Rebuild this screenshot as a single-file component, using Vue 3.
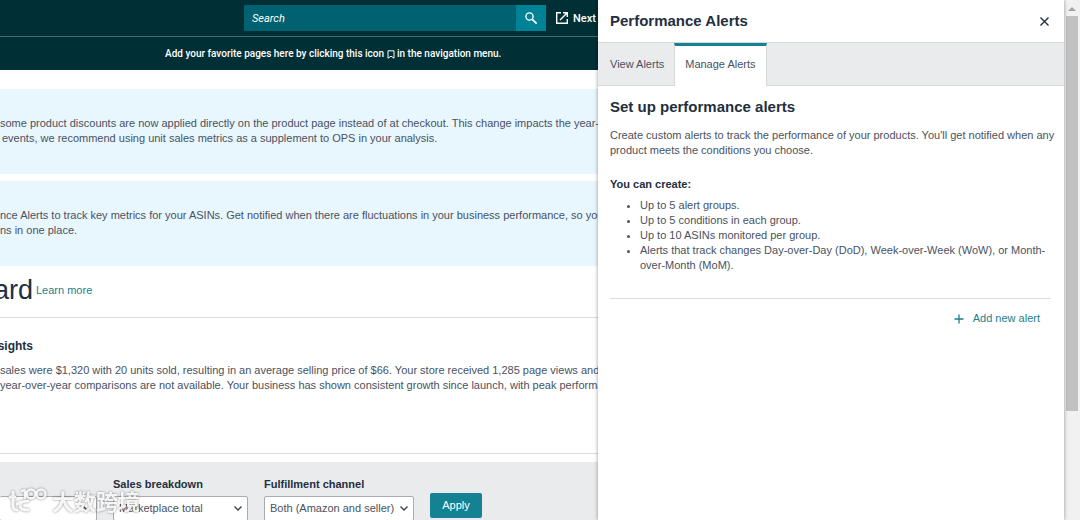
<script setup>
import { ref } from 'vue'

const activeTab = ref('Manage Alerts')
const tabs = ['View Alerts', 'Manage Alerts']
const period = ref('')
const breakdown = ref('Marketplace total')
const channel = ref('Both (Amazon and seller)')
const limits = [
  'Up to 5 alert groups.',
  'Up to 5 conditions in each group.',
  'Up to 10 ASINs monitored per group.',
  'Alerts that track changes Day-over-Day (DoD), Week-over-Week (WoW), or Month-over-Month (MoM).',
]
</script>

<template>
  <div class="screen">
    <div class="page">
      <header class="top">
        <div class="nav">
          <form class="search" @submit.prevent>
            <input type="text" placeholder="Search" aria-label="Search" />
            <button type="submit" aria-label="Submit search">
              <svg width="14" height="14" viewBox="0 0 14 14" fill="none" stroke="currentColor" stroke-width="1.4">
                <circle cx="5.5" cy="5.5" r="3.6" />
                <path d="M8.3 8.3 12.6 12.6" stroke-width="1.7" />
              </svg>
            </button>
          </form>
          <a href="#" class="next">
            <svg width="14" height="14" viewBox="0 0 14 14" fill="none" stroke="currentColor" stroke-width="1.4">
              <path d="M6 1.7H1.7v10.6h10.6V8" />
              <path d="M8 1.7h4.3V6M12.3 1.7 5 9" />
            </svg>
            Next
          </a>
        </div>
        <p class="favorites">
          Add your favorite pages here by clicking this icon
          <svg width="8" height="9" viewBox="0 0 8 9" fill="none" stroke="currentColor">
            <path d="M1 .8h6v7.400L4 6.200 1 8.200z" />
          </svg>
          in the navigation menu.
        </p>
      </header>

      <main>
        <section class="notice">
          <p>some product discounts are now applied directly on the product page instead of at checkout. This change impacts the year-over-y</p>
          <p class="tucked">events, we recommend using unit sales metrics as a supplement to OPS in your analysis.</p>
        </section>
        <section class="notice">
          <p>nce Alerts to track key metrics for your ASINs. Get notified when there are fluctuations in your business performance, so you can</p>
          <p>ns in one place.</p>
        </section>
        <div class="title">
          <h1>ard</h1>
          <a href="#">Learn more</a>
        </div>
        <section class="insights">
          <h2>sights</h2>
          <p>sales were $1,320 with 20 units sold, resulting in an average selling price of $66. Your store received 1,285 page views and main</p>
          <p>year-over-year comparisons are not available. Your business has shown consistent growth since launch, with peak performance</p>
        </section>
        <form class="filters" @submit.prevent>
          <div class="field first">
            <span class="box">
              <select v-model="period" aria-label="Date range"><option></option></select>
              <svg width="10" height="7" viewBox="0 0 10 7"><path d="M1.500 1.500 5 5l3.500-3.500" /></svg>
            </span>
          </div>
          <div class="field second">
            <label for="breakdown">Sales breakdown</label>
            <span class="box">
              <select id="breakdown" v-model="breakdown"><option>Marketplace total</option></select>
              <svg width="10" height="7" viewBox="0 0 10 7"><path d="M1.500 1.500 5 5l3.500-3.500" /></svg>
            </span>
          </div>
          <div class="field third">
            <label for="channel">Fulfillment channel</label>
            <span class="box">
              <select id="channel" v-model="channel"><option>Both (Amazon and seller)</option></select>
              <svg width="10" height="7" viewBox="0 0 10 7"><path d="M1.500 1.500 5 5l3.500-3.500" /></svg>
            </span>
          </div>
          <button type="submit" class="apply">Apply</button>
        </form>
      </main>
    </div>

    <aside class="drawer">
      <div class="drawer-head">
        <h2>Performance Alerts</h2>
        <button type="button" aria-label="Close">
          <svg width="11" height="11" viewBox="0 0 11 11" stroke="currentColor" stroke-width="1.400">
            <path d="M1.500 1.500l8 8M9.500 1.500l-8 8" />
          </svg>
        </button>
      </div>
      <div class="tabs" role="tablist">
        <button
          v-for="tab in tabs"
          :key="tab"
          type="button"
          role="tab"
          :aria-selected="tab === activeTab"
          :class="{ active: tab === activeTab }"
          @click="activeTab = tab"
        >{{ tab }}</button>
      </div>
      <div class="body">
        <h2>Set up performance alerts</h2>
        <p>Create custom alerts to track the performance of your products. You'll get notified when any product meets the conditions you choose.</p>
        <h3>You can create:</h3>
        <ul>
          <li v-for="limit in limits" :key="limit">{{ limit }}</li>
        </ul>
        <div class="actions">
          <button type="button">
            <svg width="10" height="10" viewBox="0 0 10 10" stroke="currentColor" stroke-width="1.300">
              <path d="M5 .5v9M.5 5h9" />
            </svg>
            Add new alert
          </button>
        </div>
      </div>
    </aside>

    <div class="scrollbar" aria-hidden="true">
      <svg width="8" height="4" viewBox="0 0 8 4"><path d="M4 0l4 4H0z" fill="#a3a3a3" /></svg>
      <div class="thumb"></div>
    </div>

    <div class="watermark">
      <svg width="40" height="27" viewBox="0 0 40 27" fill="none" stroke="currentColor" stroke-width="3" stroke-linecap="round" stroke-linejoin="round">
        <path d="M5 5v14q0 4 4 4M2 10h5M20 14q-8 0-8 4.500t8 4.500M9 17l3-2" />
        <path d="M14 4q3-2 3 1v6" stroke-width="2.500" />
        <circle cx="23" cy="7" r="4.500" stroke-width="2.500" />
        <circle cx="33" cy="7" r="4.500" stroke-width="2.500" />
      </svg>
      <span>大数跨境</span>
    </div>
  </div>
</template>

<style>
body {
  margin: 0;
}
</style>

<style scoped>
* {
  box-sizing: border-box;
}
.screen {
  position: relative;
  display: flex;
  height: 100vh;
  overflow: hidden;
  background: #fff;
  color: #48525f;
  font: 11px/15px "Liberation Sans", Arial, sans-serif;
}
h1, h2, h3, p, ul {
  margin: 0;
}
button, input, select {
  font: inherit;
  border: 0;
  border-radius: 0;
}
button {
  padding: 0;
  background: none;
  cursor: pointer;
}
a {
  color: #1b7f8c;
  text-decoration: none;
}
.page {
  flex: 1;
  min-width: 0;
  overflow: hidden;
  white-space: nowrap;
}
.top {
  height: 70px;
  background: #002f36;
  color: #fff;
  font-family: Roboto, sans-serif;
}
.nav {
  display: flex;
  align-items: center;
  height: 37px;
  padding-left: 244px;
  border-bottom: 1px solid #4d6a6e;
}
.search {
  display: flex;
  flex: none;
  width: 302px;
  height: 26px;
}
.search input {
  flex: 1;
  min-width: 0;
  padding: 0 8px;
  background: #006170;
  color: #fff;
  font-style: italic;
}
.search input::placeholder {
  color: #fff;
}
.search button {
  display: grid;
  place-items: center;
  width: 30px;
  background: #008296;
  color: #fff;
}
.next {
  display: flex;
  align-items: center;
  gap: 4px;
  margin-left: 9px;
  color: #fff;
  font-weight: 500;
}
.favorites {
  padding: 9px 0 0 165px;
  font-size: 10px;
  font-weight: 500;
}
.favorites svg {
  vertical-align: -2px;
}
.notice {
  height: 85px;
  padding-top: 27px;
  background: #e8f6fe;
}
.notice + .notice {
  margin-top: 7px;
}
main {
  padding-top: 19px;
}
.tucked {
  padding-left: 2px;
}
.title {
  display: flex;
  align-items: center;
  gap: 3px;
  height: 52px;
  padding-bottom: 3px;
  border-bottom: 1px solid #dcdfe0;
}
.title h1 {
  display: flex;
  justify-content: flex-end;
  width: 33px;
  color: #232f3e;
  font-size: 27px;
  font-weight: 400;
  line-height: 32px;
}
.insights {
  height: 136px;
  padding-top: 20px;
  border-bottom: 1px solid #dcdfe0;
}
.insights h2 {
  display: flex;
  justify-content: flex-end;
  width: 33px;
  margin-bottom: 9px;
  color: #232f3e;
  font-size: 12px;
  line-height: 16px;
}
.filters {
  display: flex;
  align-items: flex-start;
  gap: 16px;
  height: 80px;
  margin-top: 8px;
  padding-top: 15px;
  background: #eaebed;
}
.field {
  display: flex;
  flex: none;
  flex-direction: column;
  gap: 4px;
  color: #232f3e;
  font-weight: 700;
}
.first {
  width: 97px;
  padding-top: 19px;
}
.second {
  width: 135px;
}
.third {
  width: 150px;
}
.box {
  display: grid;
  align-items: center;
}
.box select,
.box svg {
  grid-area: 1 / 1;
}
.box select {
  width: 100%;
  height: 25px;
  padding: 0 5px;
  appearance: none;
  border: 1px solid #a6acb1;
  border-radius: 2px;
  background: #fff;
  color: #48525f;
  font-weight: 400;
}
.box svg {
  justify-self: end;
  margin-right: 5px;
  fill: none;
  stroke: #39434f;
  stroke-width: 1.4;
  pointer-events: none;
}
.first select {
  border-left: 0;
}
.apply {
  flex: none;
  width: 52px;
  height: 25px;
  margin-top: 16px;
  border-radius: 2px;
  background: #158294;
  color: #fff;
}
.drawer {
  position: relative;
  flex: none;
  width: 466px;
  background: #fff;
  box-shadow: 0 0 4px rgba(0, 0, 0, 0.4);
}
.drawer h2 {
  color: #232f3e;
  font-size: 15px;
  line-height: 20px;
}
.drawer-head {
  display: flex;
  align-items: center;
  justify-content: space-between;
  height: 42px;
  padding: 0 14px 0 12px;
}
.drawer-head button {
  display: grid;
  color: #232f3e;
}
.tabs {
  display: flex;
  height: 44px;
  border-top: 1px solid #d5d9d9;
  background: #eaebed;
  box-shadow: inset 0 -1px #d5d9d9;
}
.tabs button {
  padding: 0 10px 0 12px;
  color: #48525f;
}
.tabs .active {
  border-top: 3px solid #158294;
  border-right: 1px solid #d5d9d9;
  border-left: 1px solid #d5d9d9;
  padding: 0 10px 3px;
  background: #fff;
}
.body {
  padding: 11px 6px 0 12px;
}
.body p {
  margin-top: 11px;
}
.body h3 {
  margin-top: 19px;
  color: #232f3e;
  font-size: 11px;
  line-height: 15px;
}
.body ul {
  margin-top: 6px;
  padding: 0 0 0 30px;
}
.actions {
  display: flex;
  justify-content: flex-end;
  margin: 25px 7px 0 0;
  padding: 12px 11px;
  border-top: 1px solid #dcdfe0;
}
.actions button {
  display: flex;
  align-items: center;
  gap: 9px;
  color: #1b7f8c;
}
.scrollbar {
  display: flex;
  flex: none;
  flex-direction: column;
  align-items: center;
  gap: 5px;
  width: 16px;
  padding-top: 7px;
  background: #f1f1f1;
}
.scrollbar svg {
  flex: none;
}
.thumb {
  width: 12px;
  height: 77%;
  background: #c1c1c1;
}
.watermark {
  position: absolute;
  left: 8px;
  bottom: 6px;
  display: flex;
  align-items: center;
  gap: 4px;
  color: rgba(255, 255, 255, 0.9);
  font: 700 22px/28px "Noto Sans CJK SC", sans-serif;
  filter: drop-shadow(0 0 1px rgba(0, 0, 0, 0.5));
  pointer-events: none;
}
</style>
